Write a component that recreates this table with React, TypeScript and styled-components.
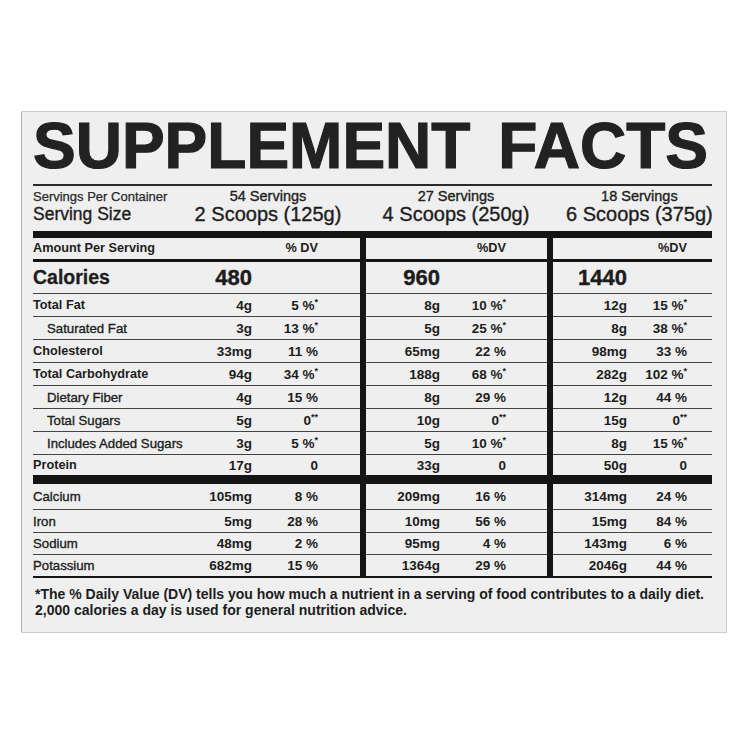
import React from "react";
import styled, { createGlobalStyle } from "styled-components";

type Cell = [string, string, string?];

interface Nutrient {
  name: string;
  bold?: boolean;
  indent?: boolean;
  cells: Cell[];
}

interface ColumnSpec {
  withLabels: boolean;
  pctWidth: number;
  padRight: number;
  dv: string;
  calories: string;
  calNudge: number;
}

const mainRows: Nutrient[] = [
  { name: "Total Fat", bold: true, cells: [["4g", "5 %", "*"], ["8g", "10 %", "*"], ["12g", "15 %", "*"]] },
  { name: "Saturated Fat", indent: true, cells: [["3g", "13 %", "*"], ["5g", "25 %", "*"], ["8g", "38 %", "*"]] },
  { name: "Cholesterol", bold: true, cells: [["33mg", "11 %"], ["65mg", "22 %"], ["98mg", "33 %"]] },
  { name: "Total Carbohydrate", bold: true, cells: [["94g", "34 %", "*"], ["188g", "68 %", "*"], ["282g", "102 %", "*"]] },
  { name: "Dietary Fiber", indent: true, cells: [["4g", "15 %"], ["8g", "29 %"], ["12g", "44 %"]] },
  { name: "Total Sugars", indent: true, cells: [["5g", "0", "**"], ["10g", "0", "**"], ["15g", "0", "**"]] },
  { name: "Includes Added Sugars", indent: true, cells: [["3g", "5 %", "*"], ["5g", "10 %", "*"], ["8g", "15 %", "*"]] },
  { name: "Protein", bold: true, cells: [["17g", "0"], ["33g", "0"], ["50g", "0"]] },
];

const mineralRows: Nutrient[] = [
  { name: "Calcium", cells: [["105mg", "8 %"], ["209mg", "16 %"], ["314mg", "24 %"]] },
  { name: "Iron", cells: [["5mg", "28 %"], ["10mg", "56 %"], ["15mg", "84 %"]] },
  { name: "Sodium", cells: [["48mg", "2 %"], ["95mg", "4 %"], ["143mg", "6 %"]] },
  { name: "Potassium", cells: [["682mg", "15 %"], ["1364g", "29 %"], ["2046g", "44 %"]] },
];

const mineralHeights = [25, 22, 21, 21];

const columns: ColumnSpec[] = [
  { withLabels: true, pctWidth: 66, padRight: 42, dv: "% DV", calories: "480", calNudge: 0 },
  { withLabels: false, pctWidth: 66, padRight: 41, dv: "%DV", calories: "960", calNudge: 0 },
  { withLabels: false, pctWidth: 60, padRight: 25, dv: "%DV", calories: "1440", calNudge: 10 },
];

const servings = [
  { count: "54 Servings", size: "2 Scoops (125g)" },
  { count: "27 Servings", size: "4 Scoops (250g)" },
  { count: "18 Servings", size: "6 Scoops (375g)" },
];

const App: React.FC = () => {
  return (
    <>
      <GlobalStyle />
      <Label>
        <Title>SUPPLEMENT FACTS</Title>
        <Rule />
        <ServingHeader>
          <SmallText>Servings Per Container</SmallText>
          {servings.map((s) => (
            <ServCount key={s.count}>{s.count}</ServCount>
          ))}
          <SizeText>Serving Size</SizeText>
          {servings.map((s) => (
            <Scoops key={s.size}>{s.size}</Scoops>
          ))}
        </ServingHeader>
        <ThickBar />
        <Table>
          {columns.map((col, ci) => (
            <Column key={ci}>
              <HeadRow $padRight={col.padRight}>
                {col.withLabels && <HeadLabel>Amount Per Serving</HeadLabel>}
                <HeadDv $width={col.pctWidth}>{col.dv}</HeadDv>
              </HeadRow>
              <CalRow $padRight={col.padRight}>
                {col.withLabels && <CalLabel>Calories</CalLabel>}
                <CalValue $fill={!col.withLabels} $nudge={col.calNudge}>
                  {col.calories}
                </CalValue>
                <Pct $width={col.pctWidth} />
              </CalRow>
              {mainRows.map((n, ri) => {
                const last = ri === mainRows.length - 1;
                const [amt, pct, star] = n.cells[ci];
                return (
                  <Row key={n.name} $h={last ? 20 : 22} $line={!last} $padRight={col.padRight}>
                    {col.withLabels && (
                      <Name $bold={n.bold} $indent={n.indent}>
                        {n.name}
                      </Name>
                    )}
                    <Amount $fill={!col.withLabels}>{amt}</Amount>
                    <Pct $width={col.pctWidth}>
                      {pct}
                      {star && <Star>{star}</Star>}
                    </Pct>
                  </Row>
                );
              })}
              <SectionBar />
              {mineralRows.map((n, ri) => {
                const last = ri === mineralRows.length - 1;
                const [amt, pct] = n.cells[ci];
                return (
                  <Row key={n.name} $h={mineralHeights[ri]} $line={!last} $padRight={col.padRight}>
                    {col.withLabels && <Name>{n.name}</Name>}
                    <Amount $fill={!col.withLabels}>{amt}</Amount>
                    <Pct $width={col.pctWidth}>{pct}</Pct>
                  </Row>
                );
              })}
            </Column>
          ))}
        </Table>
        <Footnote>
          *The % Daily Value (DV) tells you how much a nutrient in a serving of food contributes to a daily diet.
          <br />
          2,000 calories a day is used for general nutrition advice.
        </Footnote>
      </Label>
    </>
  );
};

export default App;

// Styled components
const GlobalStyle = createGlobalStyle`
  html, body {
    margin: 0;
    padding: 0;
    background: #ffffff;
  }
  body {
    font-family: "Liberation Sans", Arial, sans-serif;
    color: #1d1d1d;
  }
`;

const Label = styled.div`
  box-sizing: border-box;
  width: 706px;
  height: 522px;
  margin: 111px 0 0 21px;
  padding: 2px 14px 0 11px;
  background: #efefef;
  border: 1px solid #cdcdcd;
  border-left-color: #b5b5b5;
`;

const Title = styled.div`
  font-size: 64px;
  line-height: 65px;
  height: 65px;
  font-weight: 700;
  word-spacing: 10px;
  color: #222;
  -webkit-text-stroke: 1.2px #222;
  white-space: nowrap;
`;

const Rule = styled.div`
  height: 2px;
  margin-top: 5px;
  background: #2a2a2a;
`;

const ServingHeader = styled.div`
  display: grid;
  grid-template-columns: 157px 156px 220px 1fr;
  grid-template-rows: 15px 21px;
  padding: 3px 0 6px;
`;

const SmallText = styled.div`
  font-size: 13px;
  line-height: 15px;
  color: #2a2a2a;
  -webkit-text-stroke: 0.25px #2a2a2a;
`;

const ServCount = styled.div`
  font-size: 14.5px;
  line-height: 15px;
  text-align: center;
  color: #222;
  -webkit-text-stroke: 0.35px #222;
`;

const SizeText = styled.div`
  font-size: 17.5px;
  line-height: 21px;
  color: #1d1d1d;
  -webkit-text-stroke: 0.35px #1d1d1d;
`;

const Scoops = styled.div`
  font-size: 20px;
  line-height: 21px;
  text-align: center;
  white-space: nowrap;
  color: #1d1d1d;
  -webkit-text-stroke: 0.35px #1d1d1d;
`;

const ThickBar = styled.div`
  height: 7px;
  background: #151515;
`;

const Table = styled.div`
  display: grid;
  grid-template-columns: 327px 181px 159px;
  column-gap: 6px;
  background: #151515;
  border-bottom: 2px solid #151515;
`;

const Column = styled.div`
  display: flex;
  flex-direction: column;
  background: #efefef;
`;

const HeadRow = styled.div<{ $padRight: number }>`
  display: flex;
  align-items: flex-end;
  height: 24px;
  box-sizing: border-box;
  padding: 0 ${({ $padRight }) => $padRight}px 3px 0;
  border-bottom: 3px solid #151515;
  font-size: 12.7px;
  font-weight: 700;
  line-height: 15px;
`;

const HeadLabel = styled.div`
  flex: 1;
`;

const HeadDv = styled.div<{ $width: number }>`
  width: ${({ $width }) => $width}px;
  margin-left: auto;
  text-align: right;
`;

const CalRow = styled.div<{ $padRight: number }>`
  display: flex;
  align-items: center;
  height: 31px;
  padding-right: ${({ $padRight }) => $padRight}px;
  border-bottom: 1px solid #444;
`;

const CalLabel = styled.div`
  flex: 1;
  font-size: 19.5px;
  font-weight: 700;
  -webkit-text-stroke: 0.3px #1d1d1d;
`;

const CalValue = styled.div<{ $fill: boolean; $nudge: number }>`
  ${({ $fill }) => ($fill ? "flex: 1;" : "width: 60px;")}
  margin-right: -${({ $nudge }) => $nudge}px;
  padding-right: ${({ $nudge }) => $nudge}px;
  text-align: right;
  font-size: 22px;
  font-weight: 700;
  -webkit-text-stroke: 0.4px #1d1d1d;
`;

const Row = styled.div<{ $h: number; $line: boolean; $padRight: number }>`
  display: flex;
  align-items: center;
  height: ${({ $h }) => $h}px;
  padding-right: ${({ $padRight }) => $padRight}px;
  border-bottom: ${({ $line }) => ($line ? "1px solid #444" : "none")};
  font-size: 13px;
  line-height: 15px;
`;

const Name = styled.div<{ $bold?: boolean; $indent?: boolean }>`
  flex: 1;
  padding-left: ${({ $indent }) => ($indent ? 14 : 0)}px;
  font-weight: ${({ $bold }) => ($bold ? 700 : 400)};
  font-size: ${({ $bold }) => ($bold ? 12.7 : 13.2)}px;
  white-space: nowrap;
  -webkit-text-stroke: ${({ $bold }) => ($bold ? 0 : 0.35)}px #1d1d1d;
`;

const Amount = styled.div<{ $fill: boolean }>`
  ${({ $fill }) => ($fill ? "flex: 1;" : "width: 60px;")}
  text-align: right;
  font-size: 13.5px;
  font-weight: 700;
`;

const Pct = styled.div<{ $width: number }>`
  width: ${({ $width }) => $width}px;
  text-align: right;
  font-size: 13.5px;
  font-weight: 700;
  white-space: nowrap;
`;

const Star = styled.span`
  font-size: 9px;
  vertical-align: 5px;
  line-height: 0;
`;

const SectionBar = styled.div`
  height: 9px;
  background: #151515;
`;

const Footnote = styled.div`
  margin-top: 8px;
  padding-left: 2px;
  font-size: 14px;
  font-weight: 700;
  line-height: 16px;
  color: #1d1d1d;
  white-space: nowrap;
`;
